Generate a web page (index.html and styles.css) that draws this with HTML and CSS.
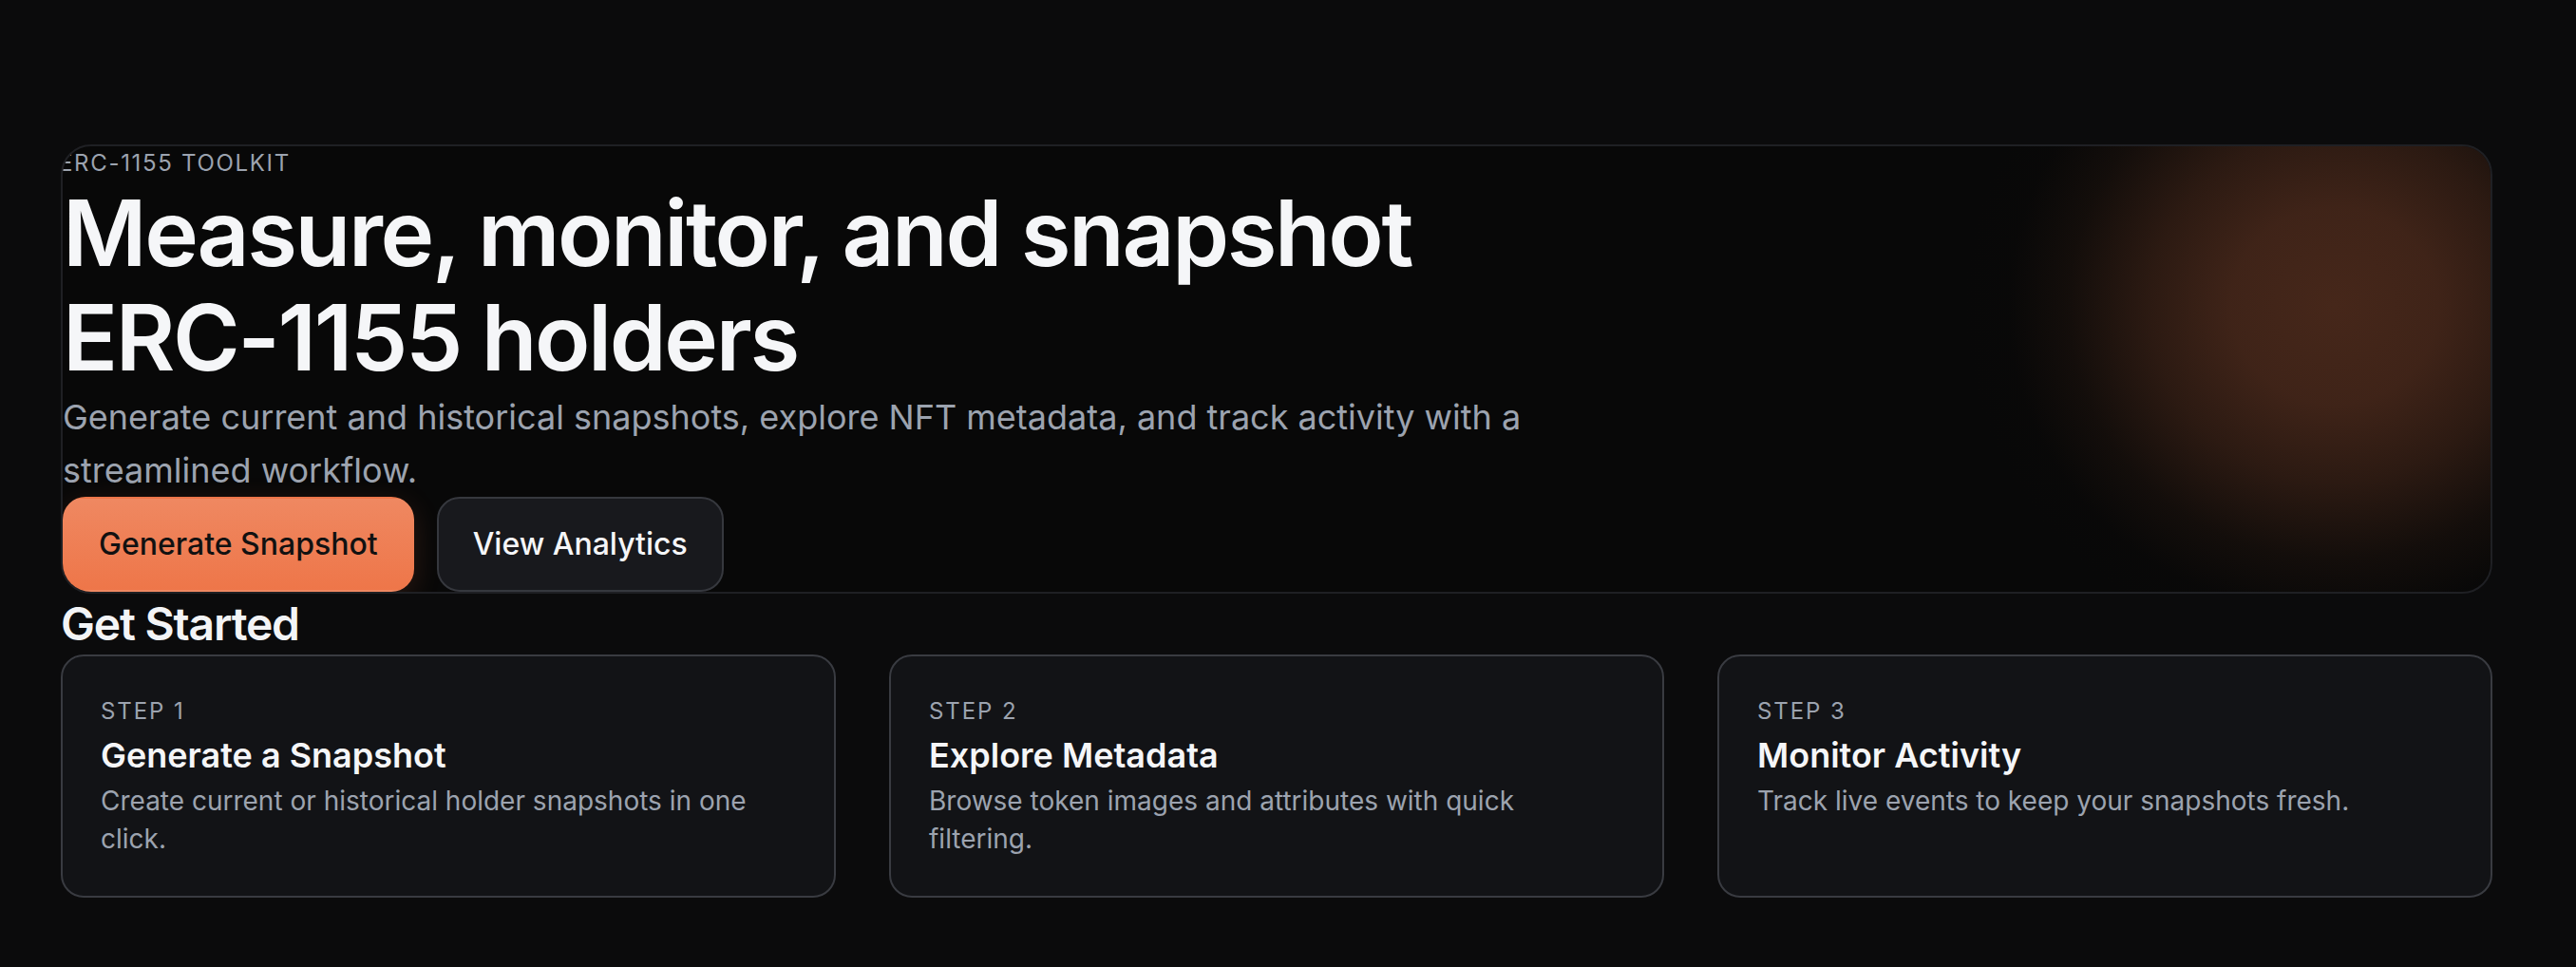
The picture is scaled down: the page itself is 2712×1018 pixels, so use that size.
FILE: index.html
```html
<!DOCTYPE html>
<html lang="en">
<head>
<meta charset="utf-8">
<title>ERC-1155 Toolkit</title>
<link rel="stylesheet" href="styles.css">
</head>
<body>
<main class="page">
  <section class="hero">
    <div class="hero-glow"></div>
    <p class="eyebrow">ERC-1155 TOOLKIT</p>
    <h1 class="hero-title">Measure, monitor, and snapshot ERC-1155 holders</h1>
    <p class="hero-sub">Generate current and historical snapshots, explore NFT metadata, and track activity with a streamlined workflow.</p>
    <div class="actions">
      <a class="btn btn-primary" href="#">Generate Snapshot</a>
      <a class="btn btn-secondary" href="#">View Analytics</a>
    </div>
  </section>
  <section class="steps">
    <h2 class="steps-title">Get Started</h2>
    <div class="step-grid">
      <article class="step-card">
        <p class="step-label">STEP 1</p>
        <h3 class="step-title">Generate a Snapshot</h3>
        <p class="step-desc">Create current or historical holder snapshots in one click.</p>
      </article>
      <article class="step-card">
        <p class="step-label">STEP 2</p>
        <h3 class="step-title">Explore Metadata</h3>
        <p class="step-desc">Browse token images and attributes with quick filtering.</p>
      </article>
      <article class="step-card">
        <p class="step-label">STEP 3</p>
        <h3 class="step-title">Monitor Activity</h3>
        <p class="step-desc">Track live events to keep your snapshots fresh.</p>
      </article>
    </div>
  </section>
</main>
</body>
</html>
```

FILE: styles.css
```css
* { box-sizing: border-box; }

html, body {
  margin: 0;
  padding: 0;
  background: #0b0b0c;
}

body {
  font-family: Inter, "Noto Sans", "Liberation Sans", sans-serif;
  color: #f5f6f8;
}

.page {
  width: 2624px;
  padding: 152px 0 0 64px;
}

.hero {
  position: relative;
  overflow: hidden;
  border: 2px solid #1f2024;
  border-radius: 32px;
  background: #080808;
  display: flex;
  flex-direction: column;
  align-items: flex-start;
}

.hero-glow {
  position: absolute;
  right: -226px;
  top: -202px;
  width: 780px;
  height: 740px;
  border-radius: 50%;
  background: radial-gradient(closest-side, rgba(70, 39, 26, 1) 0%, rgba(66, 37, 25, 0.95) 28%, rgba(54, 31, 21, 0.78) 50%, rgba(32, 20, 14, 0.48) 72%, rgba(14, 10, 8, 0.15) 88%, rgba(8, 8, 8, 0) 100%);
  pointer-events: none;
}

.eyebrow,
.hero-title,
.hero-sub,
.actions {
  position: relative;
}

.eyebrow {
  margin: 0 0 0 -4px;
  font-size: 24px;
  line-height: 36px;
  letter-spacing: 0.07em;
  color: #9ca3af;
}

.hero-title {
  margin: 0;
  max-width: 1536px;
  font-size: 96px;
  line-height: 1.15;
  font-weight: 600;
  letter-spacing: -0.025em;
  color: #f5f6f8;
}

.hero-sub {
  margin: 0;
  max-width: 1536px;
  font-size: 36px;
  line-height: 56px;
  color: #9ca3af;
}

.actions {
  display: flex;
  gap: 24px;
}

.btn {
  display: inline-block;
  padding: 24px 36px;
  border: 2px solid transparent;
  border-radius: 24px;
  font-size: 32px;
  line-height: 48px;
  font-weight: 500;
  text-decoration: none;
}

.btn-primary {
  background: linear-gradient(180deg, #ef8861 0%, #ee7649 100%);
  color: #111111;
  box-shadow: 0 8px 30px rgba(238, 118, 74, 0.16);
}

.btn-secondary {
  background: #18191d;
  border-color: #36383e;
  color: #f5f6f8;
}

.steps-title {
  margin: 0;
  font-size: 48px;
  line-height: 64px;
  font-weight: 600;
  letter-spacing: -0.025em;
  color: #f3f4f6;
}

.step-grid {
  display: grid;
  grid-template-columns: repeat(3, 1fr);
  gap: 56px;
}

.step-card {
  background: #121316;
  border: 2px solid #393b41;
  border-radius: 24px;
  padding: 40px;
}

.step-label {
  margin: 0;
  font-size: 24px;
  line-height: 36px;
  letter-spacing: 0.08em;
  color: #9ca3af;
}

.step-title {
  margin: 0;
  font-size: 36px;
  line-height: 56px;
  font-weight: 600;
  color: #f5f6f8;
}

.step-desc {
  margin: 0;
  font-size: 28px;
  line-height: 40px;
  color: #9ca3af;
}
```
